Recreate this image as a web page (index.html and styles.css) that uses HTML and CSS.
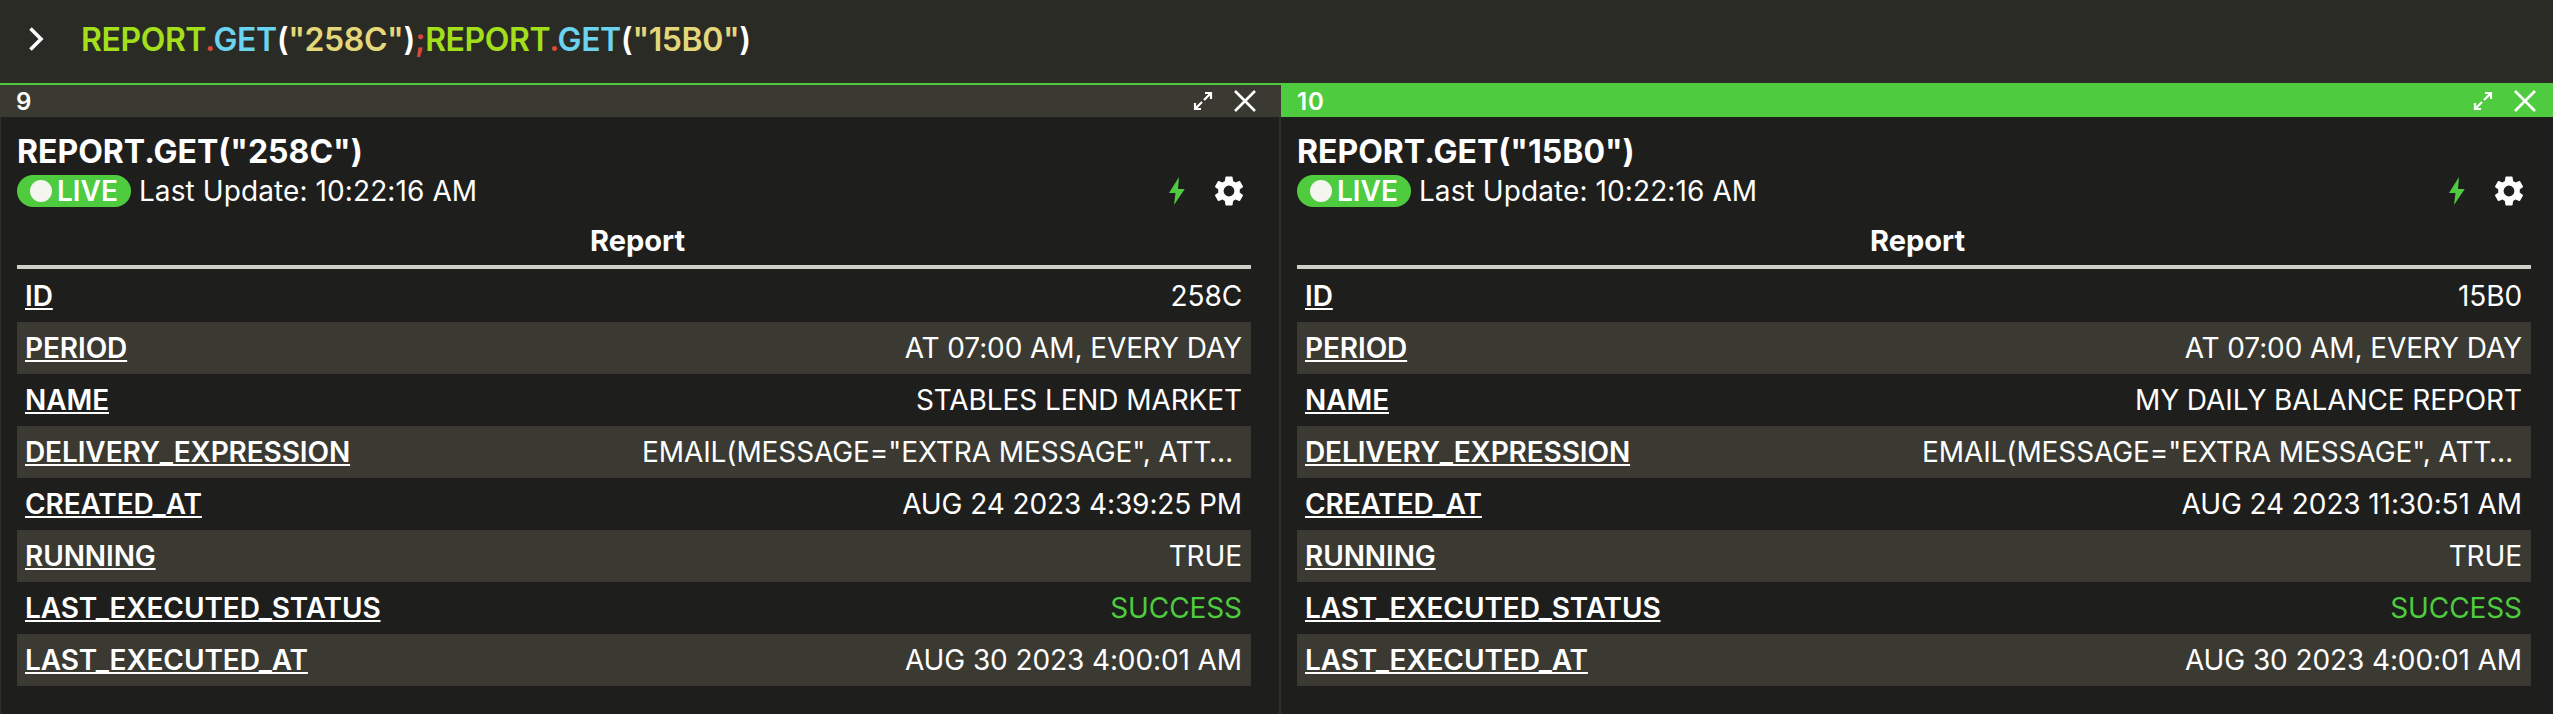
FILE: index.html
```html
<!DOCTYPE html>
<html lang="en">

<head>
    <meta charset="UTF-8">
    <title>Reports</title>
    <link rel="stylesheet" href="styles.css">
</head>

<body>
    <div class="query-bar">
        <svg class="prompt" viewBox="0 0 16 24" width="16" height="24"><path d="M2.500 1.500L13 12 2.500 22.500" fill="none" stroke="#fff" stroke-width="3.600"/></svg>
        <div class="query"><span class="obj">REPORT</span><span class="dot">.</span><span class="fn">GET</span>(<span class="str">"258C"</span>)<span class="dot">;</span><span class="obj">REPORT</span><span class="dot">.</span><span class="fn">GET</span>(<span class="str">"15B0"</span>)</div>
    </div>
    <div class="panels">
        <section class="panel">
            <div class="panel-head">
                <span class="panel-num">9</span>
                <svg class="head-icon" viewBox="0 0 20 20" width="20" height="20"><path d="M11 9l6-6M12 2h6v6M9 11l-6 6M2 12v6h6" fill="none" stroke="#fff" stroke-width="2.200"/></svg>
                <svg class="head-icon" viewBox="0 0 22 22" width="22" height="22"><path d="M1 1l20 20M21 1L1 21" fill="none" stroke="#fff" stroke-width="2.600"/></svg>
            </div>
            <div class="panel-body">
                <h2 class="title">REPORT.GET("258C")</h2>
                <div class="status">
                    <span class="live"><i class="live-dot"></i>LIVE</span>
                    <span class="updated">Last Update: 10:22:16 AM</span>
                    <svg class="bolt" viewBox="0 0 16 28" width="16" height="28"><path d="M10 0L0 16h6.500L5 28 15.700 12H9z" fill="#4fcb3f"/></svg>
                    <svg class="gear" viewBox="0 0 24 24" width="36" height="36"><path fill="#fff" d="M19.140 12.940c.04-.3.060-.61.060-.94 0-.32-.020-.64-.070-.94l2.030-1.580a.49.49 0 0 0 .12-.61l-1.920-3.320a.488.488 0 0 0-.59-.22l-2.390.96c-.5-.38-1.030-.7-1.620-.94l-.36-2.540a.484.484 0 0 0-.48-.41h-3.840c-.24 0-.43.170-.47.410l-.36 2.540c-.59.240-1.130.57-1.620.94l-2.390-.96c-.22-.080-.47 0-.59.220L2.740 8.870c-.12.210-.080.470.12.610l2.030 1.580c-.05.300-.09.630-.09.940s.02.640.07.940l-2.030 1.580a.49.49 0 0 0-.12.610l1.920 3.320c.12.220.37.290.59.220l2.390-.96c.5.380 1.030.7 1.620.94l.36 2.540c.05.240.24.410.48.410h3.840c.24 0 .44-.17.470-.41l.36-2.540c.59-.24 1.130-.56 1.620-.94l2.390.96c.22.080.47 0 .59-.22l1.920-3.320c.12-.22.070-.47-.12-.61l-2.010-1.580zM12 15.600A3.610 3.610 0 0 1 8.400 12 3.610 3.610 0 0 1 12 8.400a3.610 3.610 0 0 1 3.600 3.600 3.610 3.610 0 0 1-3.600 3.600z"/></svg>
                </div>
                <div class="table-title">Report</div>
                <div class="rows">
                    <div class="row"><span class="key">ID</span><span class="val">258C</span></div>
                    <div class="row"><span class="key">PERIOD</span><span class="val">AT 07:00 AM, EVERY DAY</span></div>
                    <div class="row"><span class="key">NAME</span><span class="val">STABLES LEND MARKET</span></div>
                    <div class="row"><span class="key">DELIVERY_EXPRESSION</span><span class="val clip">EMAIL(MESSAGE="EXTRA MESSAGE", ATTACHMENT=TRUE)</span></div>
                    <div class="row"><span class="key">CREATED_AT</span><span class="val">AUG 24 2023 4:39:25 PM</span></div>
                    <div class="row"><span class="key">RUNNING</span><span class="val">TRUE</span></div>
                    <div class="row"><span class="key">LAST_EXECUTED_STATUS</span><span class="val ok">SUCCESS</span></div>
                    <div class="row"><span class="key">LAST_EXECUTED_AT</span><span class="val">AUG 30 2023 4:00:01 AM</span></div>
                </div>
            </div>
        </section>
        <section class="panel active">
            <div class="panel-head">
                <span class="panel-num">10</span>
                <svg class="head-icon" viewBox="0 0 20 20" width="20" height="20"><path d="M11 9l6-6M12 2h6v6M9 11l-6 6M2 12v6h6" fill="none" stroke="#fff" stroke-width="2.200"/></svg>
                <svg class="head-icon" viewBox="0 0 22 22" width="22" height="22"><path d="M1 1l20 20M21 1L1 21" fill="none" stroke="#fff" stroke-width="2.600"/></svg>
            </div>
            <div class="panel-body">
                <h2 class="title">REPORT.GET("15B0")</h2>
                <div class="status">
                    <span class="live"><i class="live-dot"></i>LIVE</span>
                    <span class="updated">Last Update: 10:22:16 AM</span>
                    <svg class="bolt" viewBox="0 0 16 28" width="16" height="28"><path d="M10 0L0 16h6.500L5 28 15.700 12H9z" fill="#4fcb3f"/></svg>
                    <svg class="gear" viewBox="0 0 24 24" width="36" height="36"><path fill="#fff" d="M19.140 12.940c.04-.3.060-.61.060-.94 0-.32-.020-.64-.070-.94l2.030-1.580a.49.49 0 0 0 .12-.61l-1.920-3.320a.488.488 0 0 0-.59-.22l-2.390.96c-.5-.38-1.030-.7-1.620-.94l-.36-2.540a.484.484 0 0 0-.48-.41h-3.840c-.24 0-.43.170-.47.410l-.36 2.540c-.59.240-1.130.57-1.620.94l-2.390-.96c-.22-.080-.47 0-.59.220L2.740 8.870c-.12.210-.080.470.12.610l2.030 1.580c-.05.300-.09.630-.09.940s.02.640.07.940l-2.030 1.580a.49.49 0 0 0-.12.610l1.920 3.320c.12.220.37.290.59.220l2.390-.96c.5.380 1.030.7 1.620.94l.36 2.540c.05.240.24.410.48.410h3.840c.24 0 .44-.17.470-.41l.36-2.540c.59-.24 1.130-.56 1.620-.94l2.390.96c.22.080.47 0 .59-.22l1.920-3.320c.12-.22.070-.47-.12-.61l-2.010-1.580zM12 15.600A3.610 3.610 0 0 1 8.400 12 3.610 3.610 0 0 1 12 8.400a3.610 3.610 0 0 1 3.600 3.600 3.610 3.610 0 0 1-3.600 3.600z"/></svg>
                </div>
                <div class="table-title">Report</div>
                <div class="rows">
                    <div class="row"><span class="key">ID</span><span class="val">15B0</span></div>
                    <div class="row"><span class="key">PERIOD</span><span class="val">AT 07:00 AM, EVERY DAY</span></div>
                    <div class="row"><span class="key">NAME</span><span class="val">MY DAILY BALANCE REPORT</span></div>
                    <div class="row"><span class="key">DELIVERY_EXPRESSION</span><span class="val clip">EMAIL(MESSAGE="EXTRA MESSAGE", ATTACHMENT=TRUE)</span></div>
                    <div class="row"><span class="key">CREATED_AT</span><span class="val">AUG 24 2023 11:30:51 AM</span></div>
                    <div class="row"><span class="key">RUNNING</span><span class="val">TRUE</span></div>
                    <div class="row"><span class="key">LAST_EXECUTED_STATUS</span><span class="val ok">SUCCESS</span></div>
                    <div class="row"><span class="key">LAST_EXECUTED_AT</span><span class="val">AUG 30 2023 4:00:01 AM</span></div>
                </div>
            </div>
        </section>
    </div>
</body>

</html>
```

FILE: styles.css
```css
* {
    padding: 0;
    margin: 0;
    box-sizing: border-box;
}

html,
body {
    height: 100%;
    overflow: hidden;
}

body {
    display: flex;
    flex-direction: column;
    background: #1e1e1c;
    color: #fff;
    font-family: Inter, "Noto Sans", sans-serif;
}

.query-bar {
    display: flex;
    align-items: center;
    height: 83px;
    padding: 0 0 5px 28px;
    background: #2b2b26;
}

.prompt {
    margin-right: 37px;
}

.query {
    font-size: 32px;
    font-weight: 600;
    letter-spacing: -0.4px;
}

.obj {
    color: #a3e01b;
}

.dot {
    color: #d9483b;
}

.fn {
    color: #6ad3ef;
}

.str {
    color: #e4d77a;
}

.panels {
    flex: 1;
    display: grid;
    grid-template-columns: 1281px 1fr;
}

.panel {
    display: flex;
    flex-direction: column;
    border-right: 2px solid #2f2f2a;
    border-left: 1px solid #2f2f2a;
}

.panel.active {
    border: 0;
}

.panel-head {
    display: flex;
    align-items: center;
    height: 34px;
    margin-left: -1px;
    margin-right: -2px;
    padding: 0 25px 0 16px;
    background: #3a3a32;
    border-top: 2px solid #4fcb3f;
    font-size: 24px;
    font-weight: 600;
}

.active .panel-head {
    margin: 0;
    padding-right: 17px;
    background: #4fcb3f;
}

.panel-num {
    flex: 1;
    letter-spacing: 0.8px;
}

.head-icon {
    margin-left: 21px;
}

.panel-body {
    padding: 16px 28px 0 16px;
    flex: 1;
}

.active .panel-body {
    padding-right: 22px;
}

.title {
    font-size: 32px;
    font-weight: 700;
    line-height: 38px;
}

.status {
    display: flex;
    align-items: center;
    height: 32px;
    margin-top: 4px;
    padding-right: 4px;
}

.live {
    display: flex;
    align-items: center;
    height: 32px;
    padding: 0 13px;
    background: #4fcb3f;
    border-radius: 16px;
    font-size: 28px;
    font-weight: 600;
}

.live-dot {
    width: 22px;
    height: 22px;
    margin-right: 5px;
    background: #f4f5ef;
    border-radius: 50%;
}

.updated {
    flex: 1;
    margin-left: 8px;
    font-size: 28px;
    letter-spacing: 0.1px;
}

.gear {
    margin-left: 26px;
}

.table-title {
    height: 62px;
    padding: 18px 0 0 7px;
    border-bottom: 4px solid #cfcfc8;
    font-size: 29px;
    font-weight: 700;
    line-height: 32px;
    text-align: center;
}

.rows {
    margin-top: 1px;
}

.row {
    display: flex;
    align-items: center;
    justify-content: space-between;
    height: 52px;
    padding: 0 9px 0 8px;
    font-size: 28px;
}

.row:nth-child(even) {
    background: #3a3a32;
}

.key {
    font-weight: 600;
    letter-spacing: -0.1px;
    text-decoration: underline;
}

.val {
    font-weight: 400;
    letter-spacing: -0.1px;
}

.clip {
    width: 600px;
    overflow: hidden;
    text-overflow: ellipsis;
    white-space: nowrap;
}

.ok {
    color: #4fcb3f;
}
```
